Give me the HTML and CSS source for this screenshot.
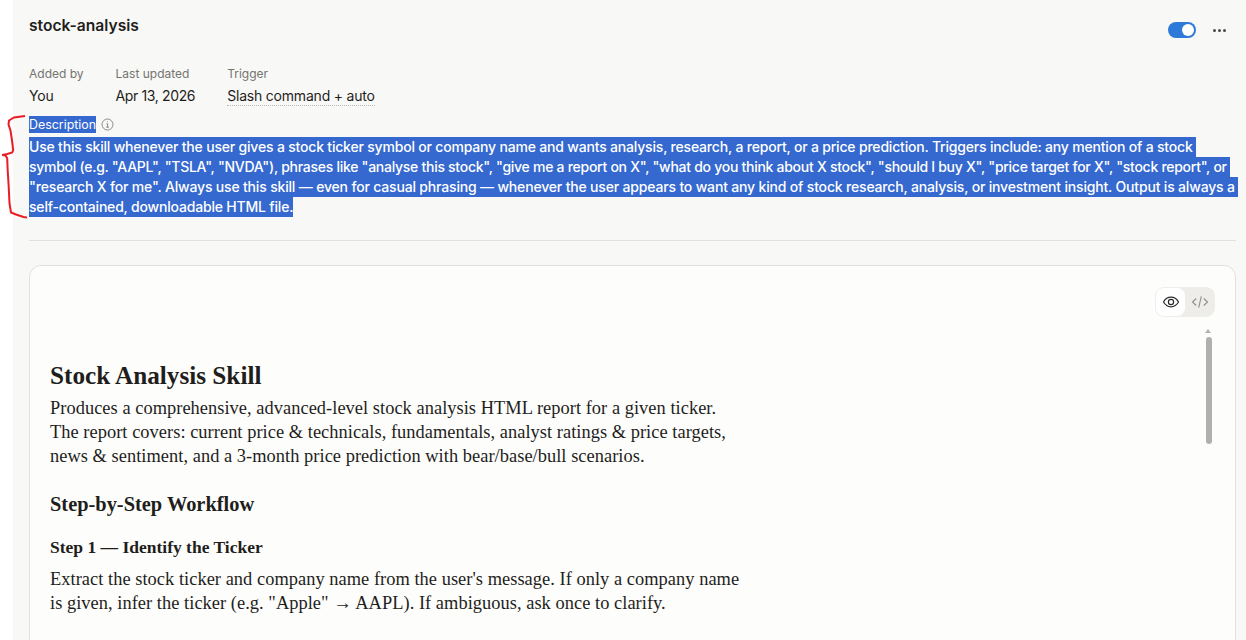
FILE: index.html
```html
<!DOCTYPE html>
<html lang="en">
  <head>
    <meta charset="UTF-8" />
    <title>stock-analysis</title>
    <link rel="stylesheet" href="styles.css">
  </head>
  <body>
    <main class="panel">
      <header class="skill-header">
        <h1 class="skill-name">stock-analysis</h1>
        <div class="skill-actions">
          <span class="toggle"><span class="toggle-knob"></span></span>
          <span class="more"><i></i><i></i><i></i></span>
        </div>
      </header>

      <div class="meta">
        <div class="meta-item">
          <div class="meta-label">Added by</div>
          <div class="meta-value">You</div>
        </div>
        <div class="meta-item">
          <div class="meta-label">Last updated</div>
          <div class="meta-value meta-date">Apr 13, 2026</div>
        </div>
        <div class="meta-item">
          <div class="meta-label">Trigger</div>
          <div class="meta-value meta-dotted">Slash command + auto</div>
        </div>
      </div>

      <section class="description">
        <div class="desc-title">
          <span class="selected">Description</span>
          <svg class="info-icon" width="13" height="13" viewBox="0 0 13 13" fill="none" stroke="#8a8a85">
            <circle cx="6.5" cy="6.5" r="5.5" />
            <path d="M5.4 5.8h1.2v3.4M5.2 9.2h2.7" />
            <circle cx="6.4" cy="3.8" r=".5" fill="#8a8a85" stroke="none" />
          </svg>
        </div>
        <p class="desc-text">
          <span class="selected">Use this skill whenever the user gives a stock ticker symbol or company name and wants analysis, research, a report, or a price prediction. Triggers include: any mention of a stock&nbsp;</span>
          <span class="selected selected-tight">symbol (e.g. "AAPL", "TSLA", "NVDA"), phrases like "analyse this stock", "give me a report on X", "what do you think about X stock", "should I buy X", "price target for X", "stock report", or&nbsp;</span>
          <span class="selected selected-mid">"research X for me". Always use this skill — even for casual phrasing — whenever the user appears to want any kind of stock research, analysis, or investment insight. Output is always a&nbsp;</span>
          <span class="selected">self-contained, downloadable HTML file.</span>
        </p>
      </section>

      <section class="doc-card">
        <div class="view-switch">
          <span class="view-btn view-btn-on">
            <svg width="18" height="18" viewBox="0 0 18 18" fill="none" stroke="#2b2b29" stroke-width="1.2">
              <path d="M1.500 9C3.300 5.800 5.900 4.200 9 4.200s5.700 1.600 7.500 4.800c-1.800 3.200-4.400 4.800-7.500 4.800S3.300 12.200 1.500 9z" />
              <circle cx="9" cy="9" r="2.600" />
            </svg>
          </span>
          <span class="view-btn">
            <svg width="18" height="18" viewBox="0 0 18 18" fill="none" stroke="#8f8f8a" stroke-width="1.100">
              <path d="M5.200 5.500 1.500 9l3.700 3.500M12.800 5.500 16.500 9l-3.700 3.500M10.300 3.300 7.700 14.700" />
            </svg>
          </span>
        </div>

        <div class="doc-body">
          <h2 class="doc-h1">Stock Analysis Skill</h2>
          <p class="doc-p">Produces a comprehensive, advanced-level stock analysis HTML report for a given ticker. The report covers: current price &amp; technicals, fundamentals, analyst ratings &amp; price targets, news &amp; sentiment, and a 3-month price prediction with bear/base/bull scenarios.</p>
          <h3 class="doc-h2">Step-by-Step Workflow</h3>
          <h4 class="doc-h3">Step 1 — Identify the Ticker</h4>
          <p class="doc-p">Extract the stock ticker and company name from the user's message. If only a company name is given, infer the ticker (e.g. "Apple" → AAPL). If ambiguous, ask once to clarify.</p>
        </div>

        <span class="scroll-arrow"></span>
        <span class="scroll-thumb"></span>
      </section>
    </main>

    <!-- hand-drawn annotation on top of the page -->
    <svg class="annotation" width="30" height="110" viewBox="0 0 30 110" fill="none" stroke="#ea1c26" stroke-width="2">
      <path d="M25 1 14 2.500 9 5.500l-.5 4 2 6 1.500 10 1.200 9.500-1 2.500-5 1.500-5 1 3.500.5 1.500 3 .5 12 1 16 .8 17 1.500 9 5 2 7.500 2.500 3.500.5" />
    </svg>
  </body>
</html>
```

FILE: styles.css
```css
html, body {
  margin: 0;
  padding: 0;
  height: 640px;
  overflow: hidden;
  background: #ffffff;
}

body {
  font-family: "Inter", "Liberation Sans", sans-serif;
  color: #1f1e1c;
  position: relative;
}

.panel {
  margin-left: 13px;
  height: 640px;
  padding: 0 10px 0 16px;
  background: #f8f8f6;
  overflow: hidden;
}

/* Header */
.skill-header {
  display: flex;
  justify-content: space-between;
  height: 52px;
}

.skill-name {
  margin: 15px 0 0;
  font-size: 15.600px;
  line-height: 21px;
  font-weight: 600;
}

.skill-actions {
  display: flex;
  align-items: center;
  gap: 17px;
  height: 60px;
}

.toggle {
  width: 28px;
  height: 16px;
  border-radius: 8px;
  background: #2f7ad9;
  display: flex;
  justify-content: flex-end;
  align-items: center;
  padding-right: 2px;
  box-sizing: border-box;
}

.toggle-knob {
  width: 12px;
  height: 12px;
  border-radius: 50%;
  background: #ffffff;
}

.more {
  display: flex;
  gap: 2px;
  margin-right: 10px;
}

.more i {
  width: 3px;
  height: 3px;
  border-radius: 50%;
  background: #4a4a47;
}

/* Meta row */
.meta {
  display: flex;
  gap: 32px;
  margin-top: 14px;
}

.meta-label {
  font-size: 12px;
  line-height: 16px;
  color: #75746f;
}

.meta-value {
  font-size: 14px;
  line-height: 20px;
  margin-top: 4px;
  letter-spacing: -0.2px;
}

.meta-date {
  letter-spacing: -0.37px;
}

.meta-dotted {
  border-bottom: 1px dotted #b9b8b2;
  line-height: 19px;
}

/* Description */
.description {
  margin-top: 10px;
  padding-bottom: 23px;
  border-bottom: 1px solid #e2e1dc;
}

.desc-title {
  display: flex;
  align-items: center;
  gap: 5px;
  height: 17px;
  font-size: 12.400px;
  line-height: 17px;
}

.desc-text {
  margin: 4px 0 0;
  font-size: 14px;
  line-height: 20px;
  font-weight: 500;
}

.selected {
  display: block;
  width: fit-content;
  white-space: nowrap;
  background: #3569cf;
  color: #ffffff;
}

.desc-text .selected {
  letter-spacing: -0.19px;
}

.desc-text .selected-tight {
  letter-spacing: -0.275px;
}

.desc-text .selected-mid {
  letter-spacing: -0.175px;
}

/* Document card */
.doc-card {
  position: relative;
  margin-top: 24px;
  height: 500px;
  background: #fdfdfb;
  border: 1px solid #e2e1dc;
  border-radius: 12px;
  box-sizing: border-box;
  padding: 93px 20px 0;
}

.view-switch {
  position: absolute;
  top: 21px;
  right: 20px;
  display: flex;
  background: #eeede9;
  border-radius: 9px;
  padding: 1px;
}

.view-btn {
  width: 29px;
  height: 28px;
  display: flex;
  align-items: center;
  justify-content: center;
  border-radius: 8px;
}

.view-btn-on {
  background: #ffffff;
}

.doc-body {
  width: 695px;
  font-family: "Liberation Serif", serif;
  color: #1f1e1c;
}

.doc-h1 {
  margin: 0 0 3px;
  font-size: 25.200px;
  line-height: 34px;
  font-weight: 700;
}

.doc-p {
  margin: 0;
  font-size: 18.400px;
  line-height: 24px;
  letter-spacing: 0.04px;
}

.doc-h2 {
  margin: 23px 0 0;
  font-size: 20.400px;
  line-height: 26px;
  font-weight: 700;
}

.doc-h3 {
  margin: 18px 0 8px;
  font-size: 17.500px;
  line-height: 24px;
  font-weight: 700;
}

/* Scrollbar */
.scroll-arrow {
  position: absolute;
  top: 63px;
  right: 24px;
  width: 0;
  height: 0;
  border: 3px solid transparent;
  border-top: 0;
  border-bottom: 4px solid #b4b4b1;
}

.scroll-thumb {
  position: absolute;
  top: 71px;
  right: 23px;
  width: 6px;
  height: 107px;
  border-radius: 3px;
  background: #b0b0ae;
}

.annotation {
  position: absolute;
  top: 115px;
  left: 0;
}
```
